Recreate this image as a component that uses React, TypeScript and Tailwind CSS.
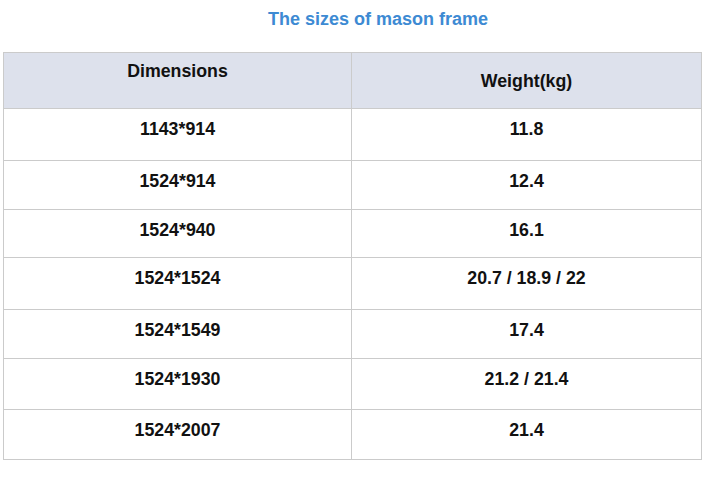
import React from 'react';

// table rows: size, weight, row height (incl. bottom border)
const rows = [
  { size: '1143*914', weight: '11.8', h: 'h-[52px]' },
  { size: '1524*914', weight: '12.4', h: 'h-[49px]' },
  { size: '1524*940', weight: '16.1', h: 'h-[48px]' },
  { size: '1524*1524', weight: '20.7 / 18.9 / 22', h: 'h-[52px]' },
  { size: '1524*1549', weight: '17.4', h: 'h-[49px]' },
  { size: '1524*1930', weight: '21.2 / 21.4', h: 'h-[51px]' },
  { size: '1524*2007', weight: '21.4', h: 'h-[50px]' },
];

const App = () => {
  return (
    <div className="min-h-screen w-[711px] h-[478px] bg-white font-['Liberation_Sans',Arial,sans-serif] text-[#111]">
      <div className="h-[52px] pt-[9px] pl-[45px] flex justify-center">
        <h1 className="text-[18px] leading-[20px] font-bold text-[#3d8ad3]">The sizes of mason frame</h1>
      </div>

      <div className="ml-[3px] w-[699px] border-l border-t border-[#cbcbcb] text-[17.75px] leading-[20px] font-bold">
        {/* header */}
        <div className="flex h-[56px] border-b border-[#cbcbcb] bg-[#dde1ec]">
          <div className="w-[348px] border-r border-[#cbcbcb] pt-[8px] text-center">Dimensions</div>
          <div className="flex-1 border-r border-[#cbcbcb] flex items-center justify-center">Weight(kg)</div>
        </div>

        {rows.map((r) => (
          <div key={r.size} className={`flex ${r.h} border-b border-[#cbcbcb]`}>
            <div className="w-[348px] border-r border-[#cbcbcb] pt-[10px] text-center">{r.size}</div>
            <div className="flex-1 border-r border-[#cbcbcb] pt-[10px] text-center">{r.weight}</div>
          </div>
        ))}
      </div>
    </div>
  );
};

export default App;
